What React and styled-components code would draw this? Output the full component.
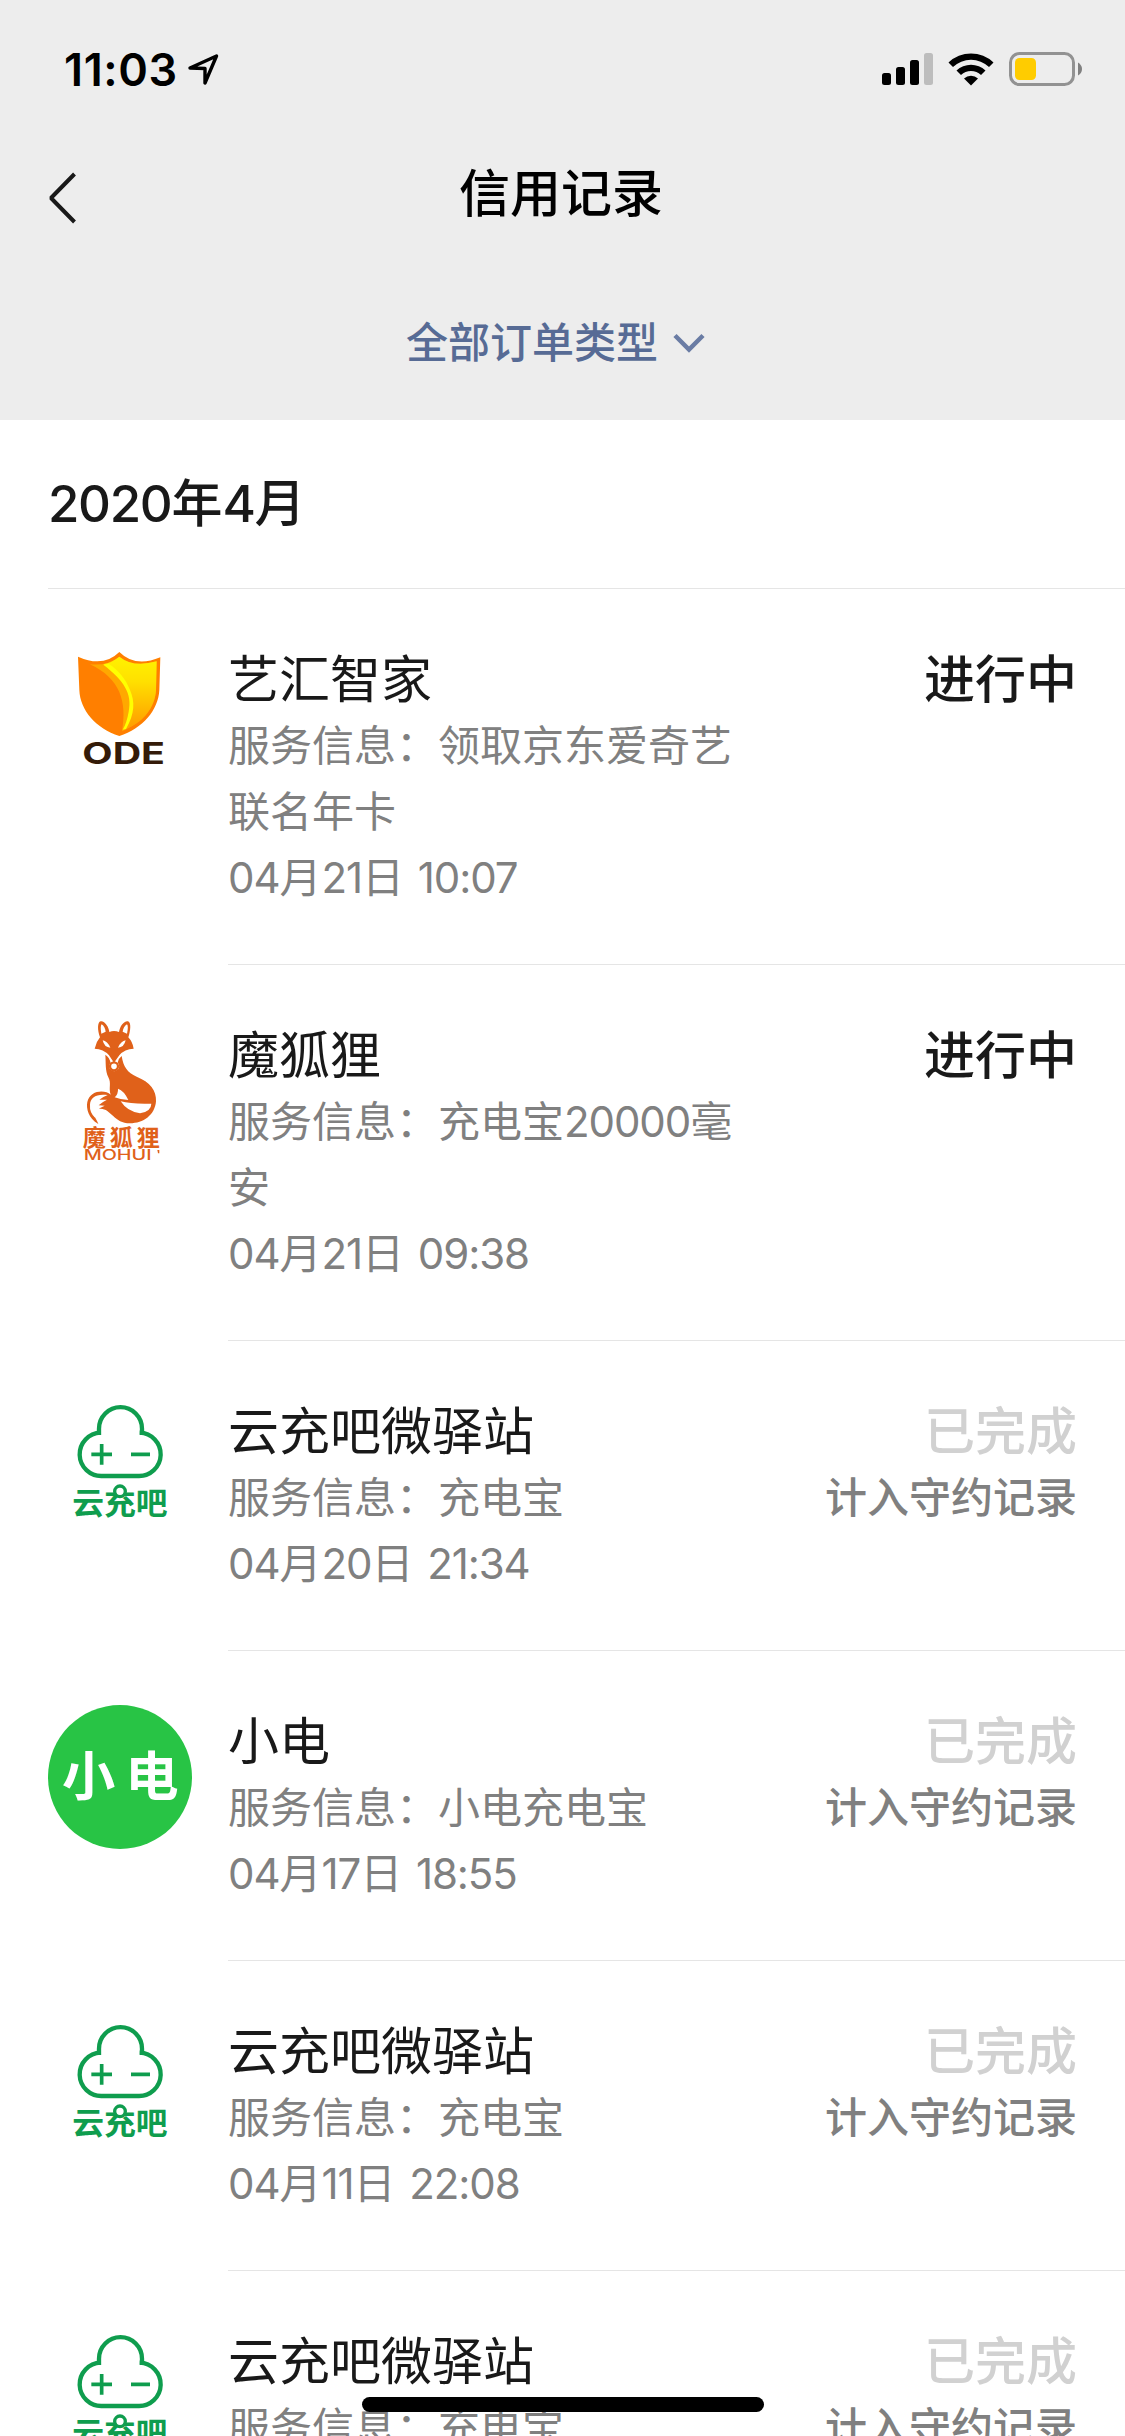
import React from 'react';
import styled, { createGlobalStyle } from 'styled-components';

const records = [
  { id: 1, logo: 'ode', name: '艺汇智家', info: '领取京东爱奇艺联名年卡', date: '04月21日 10:07', active: true },
  { id: 2, logo: 'fox', name: '魔狐狸', info: '充电宝20000毫安', date: '04月21日 09:38', active: true },
  { id: 3, logo: 'cloud', name: '云充吧微驿站', info: '充电宝', date: '04月20日 21:34' },
  { id: 4, logo: 'xiaodian', name: '小电', info: '小电充电宝', date: '04月17日 18:55' },
  { id: 5, logo: 'cloud', name: '云充吧微驿站', info: '充电宝', date: '04月11日 22:08' },
  { id: 6, logo: 'cloud', name: '云充吧微驿站', info: '充电宝', date: '04月10日 21:15' },
];

// digits are set a little tighter than the Chinese text round them
const tightDigits = (text) =>
  text.split(/([\d:]+)/).filter(Boolean).map((part, i) => (/\d/.test(part) ? <Digits key={i}>{part}</Digits> : part));

const OdeLogo = () => (
  <Logo viewBox="24 39 432 432">
    <defs>
      <linearGradient id="odeYellow" x1="0" y1="0" x2="0" y2="1">
        <stop offset="0" stopColor="#fff200" />
        <stop offset="0.35" stopColor="#ffe000" />
        <stop offset="1" stopColor="#ff9d00" />
      </linearGradient>
    </defs>
    <path
      d="M114 80Q190 114 238 66Q286 114 361 82L358 180C355 240 308 296 238 318C168 296 120 240 118 180Z"
      fill="#ff7f00"
    />
    <path d="M150 103Q202 108 238 80Q280 114 350 94L348 180C345 232 310 275 246 304C262 215 240 145 150 103Z" fill="#ffa800" />
    <path d="M190 103Q216 98 238 80Q280 114 350 94L348 180C345 232 310 275 268 292C290 215 262 150 190 103Z" fill="url(#odeYellow)" />
    <path d="M190 104C250 150 278 190 266 245Q260 280 248 299L258 297C285 250 285 215 270 180C258 148 235 120 206 101Z" fill="#ffff00" />
    <LogoText x="127" y="401" size="88" textLength="248" lengthAdjust="spacingAndGlyphs" fill="#341b08" weight="700">
      ODE
    </LogoText>
  </Logo>
);

const FoxLogo = () => (
  <Logo viewBox="24 57 432 432">
    <g fill="#e0611a">
      <path d="M180 112C172 90 172 66 182 64C194 62 207 82 208 96Q222 90 237 96C240 78 252 62 264 64C274 67 272 92 265 112Q278 126 281 146Q254 146 238 166L222 188L207 166Q190 146 164 146Q168 126 180 112Z" />
      <path d="M196 164Q208 172 212 188A15 15 0 1 0 233 188Q236 174 245 168C250 200 262 218 290 230C330 246 350 272 348 304C345 345 310 370 270 370C215 370 210 310 165 330C152 340 170 355 175 372C145 355 138 325 142 306C150 270 195 268 212 284C205 265 215 250 205 232C195 210 198 190 196 164Z" />
    </g>
    <g fill="#fff">
      <path d="M184 101Q180 78 185 73Q195 80 197 95Z" />
      <path d="M261 101Q266 78 261 73Q250 80 248 95Z" />
      <path d="M188 121Q202 123 211 143Q193 143 188 121Z" />
      <path d="M257 121Q243 123 234 143Q252 143 257 121Z" />
      <path d="M234 266Q252 272 265 300Q244 300 224 292Q235 282 234 266Z" />
      <path d="M242 304Q275 313 334 311Q334 334 300 340Q262 335 242 304Z" />
      <path d="M150 315C150 292 170 280 203 285Q190 290 178 299L201 299Q188 305 176 316L194 317Q160 330 166 354Q148 338 150 315Z" />
    </g>
    <circle cx="222" cy="199" r="12" fill="#fff" stroke="#e0611a" strokeWidth="7" />
    <LogoText x="128" y="437" size="69" letterSpacing="12" fill="#e0611a" weight="700">
      魔狐狸
    </LogoText>
    <LogoText x="131" y="480" size="42" textLength="204" lengthAdjust="spacingAndGlyphs" fill="#e0611a" weight="500">
      MOHUI
    </LogoText>
    <path d="M352 450h6v10h-4z" fill="#e0611a" />
  </Logo>
);

const CloudLogo = () => (
  <Logo viewBox="24 45 432 432">
    <g fill="none" stroke="#0f9d4e" strokeWidth="13">
      <path d="M177 165V146A64 64 0 0 1 306 146V165" />
      <path d="M182 158A65 65 0 0 0 186 288H295A65 65 0 0 0 299 158" />
      <path d="M154 223H216M185 192V254M273 223H330" strokeWidth="11" />
    </g>
    <LogoText x="97" y="403" size="92" textLength="286" lengthAdjust="spacingAndGlyphs" fill="#0f9d4e" weight="700">
      云充吧
    </LogoText>
    <circle cx="240" cy="334" r="16" fill="#fff" stroke="#0f9d4e" strokeWidth="10" />
  </Logo>
);

const XiaodianLogo = () => (
  <Logo viewBox="24 45 432 432">
    <circle cx="240" cy="261" r="216" fill="#28c445" />
    <LogoText x="66" y="317" size="160" fill="#fff" weight="700">
      小
    </LogoText>
    <LogoText x="256" y="317" size="160" fill="#fff" weight="700">
      电
    </LogoText>
  </Logo>
);

const logos = { ode: OdeLogo, fox: FoxLogo, cloud: CloudLogo, xiaodian: XiaodianLogo };

const RecordItem = ({ record }) => {
  const BrandLogo = logos[record.logo];

  return (
    <Row>
      <BrandLogo />
      <RowBody>
        <Details>
          <Name>{record.name}</Name>
          <Info>{tightDigits(`服务信息：${record.info}`)}</Info>
          <Info>{tightDigits(record.date)}</Info>
        </Details>
        <Result>
          <Status $active={record.active}>{record.active ? '进行中' : '已完成'}</Status>
          {!record.active && <Note>计入守约记录</Note>}
        </Result>
      </RowBody>
    </Row>
  );
};

const App = () => {
  return (
    <>
      <GlobalStyle />
      <Screen>
        <Header>
          <StatusBar>
            <Clock>
              <Time>11:03</Time>
              <svg width="32" height="34" viewBox="0 0 32 34" fill="none" stroke="#000" strokeWidth="3.400" strokeLinejoin="round">
                <path d="M3 16L29.500 4L18 31V16.500Z" />
              </svg>
            </Clock>
            <Indicators>
              <svg width="51" height="34" viewBox="0 0 51 34">
                <rect x="0" y="21" width="9" height="12" rx="2.500" />
                <rect x="14" y="15" width="9" height="18" rx="2.500" />
                <rect x="28" y="8" width="9" height="25" rx="2.500" />
                <rect x="42" y="1" width="9" height="32" rx="2.500" fill="#bdbdbd" />
              </svg>
              <svg width="46" height="34" viewBox="0 0 46 34">
                <path d="M0.500 10.500A32.500 32.500 0 0 1 45.500 10.500L41 15A26 26 0 0 0 5 15Z" />
                <path d="M8.500 18.500A21 21 0 0 1 37.500 18.500L33 23A14.500 14.500 0 0 0 13 23Z" />
                <path d="M16 26.500A10.500 10.500 0 0 1 30 26.500L23 33.500Z" />
              </svg>
              <svg width="74" height="34" viewBox="0 0 74 34">
                <rect x="1.500" y="1.500" width="63" height="31" rx="9" fill="none" stroke="#929292" strokeWidth="3" />
                <rect x="6" y="6" width="21" height="22" rx="4.500" fill="#ffcc00" />
                <path d="M69 10.500Q73 13 73 17Q73 21 69 23.500Z" fill="#808080" />
              </svg>
            </Indicators>
          </StatusBar>
          <NavBar>
            <svg width="30" height="52" viewBox="0 0 30 52" fill="none" stroke="#191919" strokeWidth="4">
              <path d="M26.500 2L3 26L26.500 50" strokeLinejoin="bevel" />
            </svg>
            <Title>信用记录</Title>
          </NavBar>
          <Filter>
            <FilterLabel>全部订单类型</FilterLabel>
            <svg width="32" height="20" viewBox="0 0 32 20" fill="none" stroke="#6a7ca4" strokeWidth="4.500">
              <path d="M2 2.500L16 16.500L30 2.500" />
            </svg>
          </Filter>
        </Header>
        <Month>{tightDigits('2020年4月')}</Month>
        {records.map((record) => (
          <RecordItem key={record.id} record={record} />
        ))}
        <HomeIndicator />
      </Screen>
    </>
  );
};

export default App;

const GlobalStyle = createGlobalStyle`
  body {
    margin: 0;
    background: #fff;
    overflow: hidden;
    font-family: Inter, 'Noto Sans CJK SC', sans-serif;
  }
`;

const Screen = styled.div`
  position: relative;
  width: 1125px;
  height: 2436px;
  overflow: hidden;
  background-color: #fff;
`;

const Header = styled.header`
  height: 420px;
  background-color: #ededed;
`;

const StatusBar = styled.div`
  display: flex;
  justify-content: space-between;
  align-items: center;
  height: 138px;
  padding: 0 42px 0 64px;
  box-sizing: border-box;
`;

const Clock = styled.div`
  display: flex;
  align-items: center;
  gap: 9px;
`;

const Time = styled.span`
  font-size: 45px;
  font-weight: 600;
  letter-spacing: 0.6px;
`;

const Indicators = styled.div`
  display: flex;
  align-items: center;
  gap: 15px;
`;

const NavBar = styled.div`
  display: flex;
  align-items: center;
  height: 120px;
  padding-left: 48px;
`;

const Title = styled.h1`
  flex: 1;
  margin: -9px 81px 0 0;
  text-align: center;
  font-size: 51px;
  font-weight: 500;
  line-height: 72px;
`;

const Filter = styled.div`
  display: flex;
  justify-content: center;
  align-items: center;
  gap: 15px;
  height: 170px;
  margin-right: 14px;
`;

const FilterLabel = styled.span`
  margin-bottom: 8px;
  color: #576b95;
  font-size: 42px;
  font-weight: 500;
`;

const Month = styled.h2`
  height: 168px;
  margin: 0 0 0 48px;
  border-bottom: 1px solid #e5e5e5;
  color: #191919;
  font-size: 51px;
  font-weight: 500;
  line-height: 168px;
`;

const Digits = styled.span`
  letter-spacing: -0.026em;
`;

const Row = styled.div`
  display: flex;
  gap: 36px;
  padding-left: 48px;
`;

const Logo = styled.svg`
  flex-shrink: 0;
  width: 144px;
  height: 144px;
  margin-top: 54px;
`;

const LogoText = styled.text`
  font-family: Inter, 'Noto Sans CJK SC', sans-serif;
  font-size: ${(props) => props.size}px;
  font-weight: ${(props) => props.weight};
`;

const RowBody = styled.div`
  flex: 1;
  display: flex;
  justify-content: space-between;
  padding: 57px 48px 53px 0;
  border-bottom: 1px solid #e5e5e5;
`;

const Details = styled.div`
  width: 515px;
`;

const Name = styled.div`
  color: #191919;
  font-size: 51px;
  line-height: 67px;
`;

const Info = styled.div`
  color: #808080;
  font-size: 42px;
  line-height: 66px;
  word-spacing: 2px;
`;

const Result = styled.div`
  text-align: right;
`;

const Status = styled.div`
  color: ${(props) => (props.$active ? '#191919' : '#d1d1d1')};
  font-size: 51px;
  font-weight: 500;
  line-height: 67px;
`;

const Note = styled.div`
  color: #808080;
  font-size: 42px;
  font-weight: 500;
  line-height: 66px;
`;

const HomeIndicator = styled.div`
  position: absolute;
  left: 362px;
  bottom: 24px;
  width: 402px;
  height: 15px;
  border-radius: 8px;
  background-color: #000;
`;
